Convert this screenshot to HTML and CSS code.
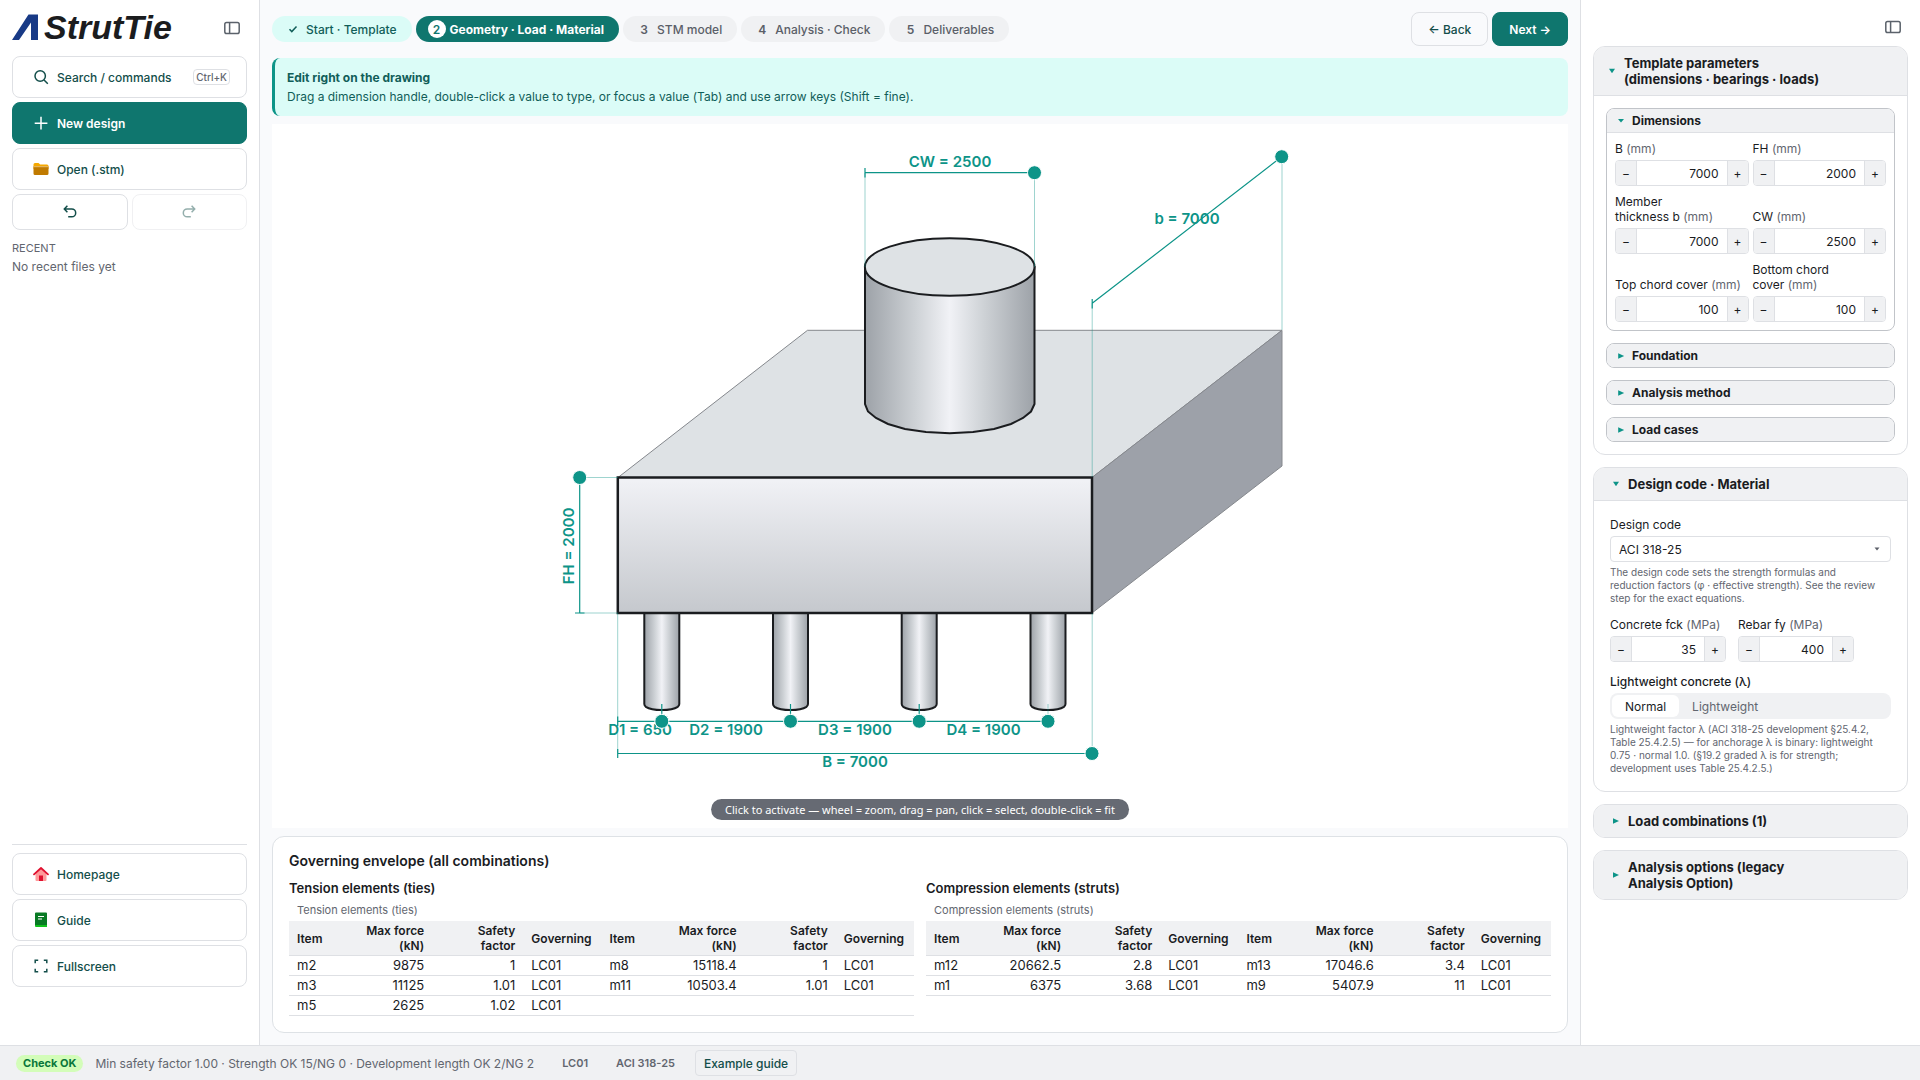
FILE: index.html
```html
<!DOCTYPE html>
<html lang="en">
<head>
<meta charset="utf-8">
<meta name="viewport" content="width=device-width, initial-scale=1">
<title>AStrutTie</title>
<link rel="stylesheet" href="styles.css">
</head>
<body>
<div class="app">
  <aside class="sidebar">
    <div class="brand">
      <div class="logo">
        <svg class="logo-mark" viewBox="0 0 28 26" aria-hidden="true"><path d="M0 26 16.500 0.500H26V26H19V8.500L7 26Z"/></svg>
        <span class="logo-text">StrutTie</span>
      </div>
      <button class="icon-btn" type="button" aria-label="Toggle sidebar">
        <svg viewBox="0 0 18 14" class="panel-icon"><rect x="1.800" y="1.400" width="14.400" height="11.200" rx="1.800"/><path d="M6.600 1.400v11.200"/></svg>
      </button>
    </div>
    <button class="side-btn" type="button">
      <svg class="ic" viewBox="0 0 16 16"><circle cx="7.200" cy="7" r="5.200"/><path d="m11 11 3.800 3.800"/></svg>
      <span>Search / commands</span><kbd>Ctrl+K</kbd>
    </button>
    <button class="side-btn side-btn-primary" type="button">
      <svg class="ic" viewBox="0 0 16 16"><path d="M8 1.800v12.700M1.700 8.200h12.700"/></svg>
      <span>New design</span>
    </button>
    <button class="side-btn" type="button">
      <svg class="pic" viewBox="0 0 16 16"><path fill="#f5a800" d="M0.500 3.500a1.500 1.500 0 0 1 1.500-1.500h3.500l1.700 1.500H14a1.500 1.500 0 0 1 1.500 1.500v3h-15z"/><path fill="#c07a00" d="M0.500 5.600h15v6.900a1.500 1.500 0 0 1-1.500 1.500H2a1.500 1.500 0 0 1-1.500-1.500z"/><path fill="#e8bd72" d="M0.500 5.200h15v1h-15z"/></svg>
      <span>Open (.stm)</span>
    </button>
    <div class="history">
      <button class="side-btn" type="button" aria-label="Undo"><svg class="ic" viewBox="0 0 16 16"><path d="M5.400 1.800 2.300 5l3.100 3.200M2.600 5h7.200a3.900 3.900 0 0 1 0 7.800H6.200"/></svg></button>
      <button class="side-btn" type="button" aria-label="Redo" disabled><svg class="ic" viewBox="0 0 16 16"><path d="m10.600 1.800 3.100 3.200-3.100 3.200M13.400 5H6.200a3.900 3.900 0 0 0 0 7.800h3.600"/></svg></button>
    </div>
    <div class="recent">
      <h2>RECENT</h2>
      <p>No recent files yet</p>
    </div>
    <nav class="side-foot">
      <button class="side-btn" type="button">
        <svg class="pic" viewBox="0 0 16 16"><path fill="#ff9a9a" d="M2.500 7.500 8 2.500l5.500 5V14a1 1 0 0 1-1 1h-9a1 1 0 0 1-1-1z"/><path fill="#e0102f" d="M6 9.500h4V15H6z"/><path fill="none" stroke="#e0102f" stroke-width="1.800" stroke-linecap="round" stroke-linejoin="round" d="M1 8.300 8 2l7 6.300"/></svg>
        <span>Homepage</span>
      </button>
      <button class="side-btn" type="button">
        <svg class="pic" viewBox="0 0 16 16"><path fill="#10c21c" d="M2 11h12v4H3a1 1 0 0 1-1-1z"/><path fill="#087a24" d="M2 1.500a1 1 0 0 1 1-1h10a1 1 0 0 1 1 1V13H2z"/><path stroke="#fff" stroke-width="1.100" d="M5 4.500h6M5 7h4"/></svg>
        <span>Guide</span>
      </button>
      <button class="side-btn" type="button">
        <svg class="ic" viewBox="0 0 16 16"><path d="M2.200 5.200V2.200h3M10.800 2.200h3v3M13.800 10.800v3h-3M5.200 13.800h-3v-3"/></svg>
        <span>Fullscreen</span>
      </button>
    </nav>
  </aside>

  <main class="main">
    <header class="topbar">
      <ol class="steps">
        <li><button class="step step-done" type="button"><span class="num"><svg viewBox="0 0 10 10"><path d="m1.500 5.300 2.300 2.300 4.700-5"/></svg></span>Start · Template</button></li>
        <li><button class="step step-active" type="button" aria-current="step"><span class="num">2</span>Geometry · Load · Material</button></li>
        <li><button class="step" type="button"><span class="num">3</span>STM model</button></li>
        <li><button class="step" type="button"><span class="num">4</span>Analysis · Check</button></li>
        <li><button class="step" type="button"><span class="num">5</span>Deliverables</button></li>
      </ol>
      <button class="btn" type="button">← Back</button>
      <button class="btn btn-primary" type="button">Next →</button>
    </header>

    <section class="banner">
      <strong>Edit right on the drawing</strong>
      <p>Drag a dimension handle, double-click a value to type, or focus a value (Tab) and use arrow keys (Shift = fine).</p>
    </section>

    <section class="canvas" aria-label="Drawing">
      <svg viewBox="272 124 1296 704" class="drawing">
        <defs>
          <linearGradient id="front" x1="0" y1="0" x2="0" y2="1"><stop offset="0" stop-color="#f1f2f6"/><stop offset="1" stop-color="#c5c8cd"/></linearGradient>
          <linearGradient id="round" x1="0" y1="0" x2="1" y2="0"><stop offset="0" stop-color="#9da2a8"/><stop offset="0.300" stop-color="#ced2d6"/><stop offset="0.500" stop-color="#f1f2f6"/><stop offset="0.700" stop-color="#ced2d6"/><stop offset="1" stop-color="#9da2a8"/></linearGradient>
          <path id="pile" d="M-17.500 0V91Q-17.500 92.500-16 93.800Q-11 97 0 97T16 93.800Q17.500 92.500 17.500 91V0Z"/>
        </defs>
        <path class="thin" fill="#dee2e5" d="M618 477.500 807.500 330.300H1282L1092 477.500Z"/>
        <path class="thin" fill="#9da1a9" d="M1092 477.500 1282 330.300V466L1092 613Z"/>
        <g class="thick" fill="url(#round)">
          <use href="#pile" x="661.800" y="613"/><use href="#pile" x="790.500" y="613"/><use href="#pile" x="919.200" y="613"/><use href="#pile" x="1048" y="613"/>
        </g>
        <rect class="heavy" fill="url(#front)" x="617.800" y="477.500" width="474.200" height="135.500"/>
        <path class="thick" fill="url(#round)" d="M865 267V404L868 411.500 876 418 888 424 905 429 926 432 949.700 433.200 973 432 994 429 1011 424 1023 418 1031 411.500 1034.500 404V267Z"/>
        <ellipse class="thick" fill="#dee2e5" cx="949.700" cy="267" rx="84.800" ry="28.800"/>
        <g class="ext">
          <path d="M865 173V267M1034.500 173V267M1092.200 303V477M1282 157V330M579.700 477.500H618M579.700 613H618M617.700 613V753M1092.200 613V753M1048 704V721"/>
        </g>
        <g class="dim">
          <path d="M865 172.700H1034.500M865 168V177.500M1092.200 303.300 1281.700 156.700M1092.200 299V308.500M579.700 477.500V613M575 613H584.500M617.700 721.300H1048M617.700 753.500H1092M617.700 716.500V726M617.700 749V758M661.800 704V721M790.500 704V721M919.200 704V721"/>
        </g>
        <g class="labels">
          <text x="950" y="166.500">CW = 2500</text>
          <text x="1187" y="223.500">b = 7000</text>
          <text transform="translate(574 546) rotate(-90)">FH = 2000</text>
          <text x="640" y="734.500">D1 = 650</text>
          <text x="726" y="734.500">D2 = 1900</text>
          <text x="855" y="734.500">D3 = 1900</text>
          <text x="983.500" y="734.500">D4 = 1900</text>
          <text x="855" y="767">B = 7000</text>
        </g>
        <g class="handles">
          <circle cx="1034.500" cy="172.700" r="7"/><circle cx="1281.700" cy="156.700" r="7"/><circle cx="579.700" cy="477.500" r="7"/>
          <circle cx="661.800" cy="721.300" r="7"/><circle cx="790.500" cy="721.300" r="7"/><circle cx="919.200" cy="721.300" r="7"/><circle cx="1048" cy="721.300" r="7"/><circle cx="1092" cy="753.500" r="7"/>
        </g>
      </svg>
      <p class="hint">Click to activate — wheel = zoom, drag = pan, click = select, double-click = fit</p>
    </section>

    <section class="results">
      <h2>Governing envelope (all combinations)</h2>
      <div class="result-cols">
        <div>
          <h3>Tension elements (ties)</h3>
          <table>
            <caption>Tension elements (ties)</caption>
            <colgroup><col class="c-item"><col class="c-num"><col class="c-num"><col class="c-gov"><col class="c-item"><col class="c-num"><col class="c-num"><col class="c-gov"></colgroup>
            <thead><tr><th>Item</th><th class="r">Max force (kN)</th><th class="r">Safety factor</th><th>Governing</th><th>Item</th><th class="r">Max force (kN)</th><th class="r">Safety factor</th><th>Governing</th></tr></thead>
            <tbody>
              <tr><td>m2</td><td class="r">9875</td><td class="r">1</td><td>LC01</td><td>m8</td><td class="r">15118.4</td><td class="r">1</td><td>LC01</td></tr>
              <tr><td>m3</td><td class="r">11125</td><td class="r">1.01</td><td>LC01</td><td>m11</td><td class="r">10503.4</td><td class="r">1.01</td><td>LC01</td></tr>
              <tr><td>m5</td><td class="r">2625</td><td class="r">1.02</td><td>LC01</td><td></td><td></td><td></td><td></td></tr>
            </tbody>
          </table>
        </div>
        <div>
          <h3>Compression elements (struts)</h3>
          <table>
            <caption>Compression elements (struts)</caption>
            <colgroup><col class="c-item"><col class="c-num"><col class="c-num"><col class="c-gov"><col class="c-item"><col class="c-num"><col class="c-num"><col class="c-gov"></colgroup>
            <thead><tr><th>Item</th><th class="r">Max force (kN)</th><th class="r">Safety factor</th><th>Governing</th><th>Item</th><th class="r">Max force (kN)</th><th class="r">Safety factor</th><th>Governing</th></tr></thead>
            <tbody>
              <tr><td>m12</td><td class="r">20662.5</td><td class="r">2.8</td><td>LC01</td><td>m13</td><td class="r">17046.6</td><td class="r">3.4</td><td>LC01</td></tr>
              <tr><td>m1</td><td class="r">6375</td><td class="r">3.68</td><td>LC01</td><td>m9</td><td class="r">5407.9</td><td class="r">11</td><td>LC01</td></tr>
            </tbody>
          </table>
        </div>
      </div>
    </section>
  </main>

  <aside class="panel">
    <div class="panel-top">
      <button class="icon-btn" type="button" aria-label="Toggle panel">
        <svg viewBox="0 0 18 14" class="panel-icon"><rect x="1.800" y="1.400" width="14.400" height="11.200" rx="1.800"/><path d="M6.600 1.400v11.200"/></svg>
      </button>
    </div>

    <details class="section section-tight" open>
      <summary><svg class="arrow" viewBox="0 0 8 8"><path d="M1 1.700h6L4 6.300z"/></svg><span>Template parameters (dimensions · bearings · loads)</span></summary>
      <div class="groups">
        <details class="group" open>
          <summary><svg class="arrow" viewBox="0 0 8 8"><path d="M1 2h6L4 5.500z"/></svg><span>Dimensions</span></summary>
          <div class="params">
            <div class="field"><label for="p-b">B <span>(mm)</span></label><div class="stepper"><button type="button" aria-label="Decrease">−</button><input id="p-b" value="7000"><button type="button" aria-label="Increase">+</button></div></div>
            <div class="field"><label for="p-fh">FH <span>(mm)</span></label><div class="stepper"><button type="button" aria-label="Decrease">−</button><input id="p-fh" value="2000"><button type="button" aria-label="Increase">+</button></div></div>
            <div class="field"><label for="p-t">Member<br>thickness b <span>(mm)</span></label><div class="stepper"><button type="button" aria-label="Decrease">−</button><input id="p-t" value="7000"><button type="button" aria-label="Increase">+</button></div></div>
            <div class="field"><label for="p-cw">CW <span>(mm)</span></label><div class="stepper"><button type="button" aria-label="Decrease">−</button><input id="p-cw" value="2500"><button type="button" aria-label="Increase">+</button></div></div>
            <div class="field"><label for="p-tc">Top chord cover <span>(mm)</span></label><div class="stepper"><button type="button" aria-label="Decrease">−</button><input id="p-tc" value="100"><button type="button" aria-label="Increase">+</button></div></div>
            <div class="field"><label for="p-bc">Bottom chord<br>cover <span>(mm)</span></label><div class="stepper"><button type="button" aria-label="Decrease">−</button><input id="p-bc" value="100"><button type="button" aria-label="Increase">+</button></div></div>
          </div>
        </details>
        <details class="group"><summary><svg class="arrow" viewBox="0 0 8 8"><path d="M1.200 1.200v5.600L7.200 4z"/></svg><span>Foundation</span></summary></details>
        <details class="group"><summary><svg class="arrow" viewBox="0 0 8 8"><path d="M1.200 1.200v5.600L7.200 4z"/></svg><span>Analysis method</span></summary></details>
        <details class="group"><summary><svg class="arrow" viewBox="0 0 8 8"><path d="M1.200 1.200v5.600L7.200 4z"/></svg><span>Load cases</span></summary></details>
      </div>
    </details>

    <details class="section" open>
      <summary><svg class="arrow" viewBox="0 0 8 8"><path d="M1 1.700h6L4 6.300z"/></svg><span>Design code · Material</span></summary>
      <div class="material">
        <div class="field">
          <label for="code">Design code</label>
          <div class="select"><select id="code"><option>ACI 318-25</option></select><svg class="caret" viewBox="0 0 8 8"><path d="M1.500 2.500h5L4 5.500z"/></svg></div>
          <p class="help">The design code sets the strength formulas and<br>reduction factors (φ · effective strength). See the review<br>step for the exact equations.</p>
        </div>
        <div class="strengths">
          <div class="field"><label for="fck">Concrete fck <span>(MPa)</span></label><div class="stepper"><button type="button" aria-label="Decrease">−</button><input id="fck" value="35"><button type="button" aria-label="Increase">+</button></div></div>
          <div class="field"><label for="fy">Rebar fy <span>(MPa)</span></label><div class="stepper"><button type="button" aria-label="Decrease">−</button><input id="fy" value="400"><button type="button" aria-label="Increase">+</button></div></div>
        </div>
        <div class="field">
          <span class="label-strong" id="lw">Lightweight concrete (λ)</span>
          <div class="segmented" role="group" aria-labelledby="lw"><button type="button" class="on" aria-pressed="true">Normal</button><button type="button" aria-pressed="false">Lightweight</button></div>
          <p class="help">Lightweight factor λ (ACI 318-25 development §25.4.2,<br>Table 25.4.2.5) — for anchorage λ is binary: lightweight<br>0.75 · normal 1.0. (§19.2 graded λ is for strength;<br>development uses Table 25.4.2.5.)</p>
        </div>
      </div>
    </details>

    <details class="section"><summary><svg class="arrow" viewBox="0 0 8 8"><path d="M1 1.300v5.400L7 4z"/></svg><span>Load combinations (1)</span></summary></details>
    <details class="section"><summary><svg class="arrow" viewBox="0 0 8 8"><path d="M1 1.300v5.400L7 4z"/></svg><span>Analysis options (legacy Analysis Option)</span></summary></details>
  </aside>

  <footer class="status">
    <span class="badge">Check OK</span>
    <span class="overview">Min safety factor 1.00 · Strength OK 15/NG 0 · Development length OK 2/NG 2</span>
    <span class="tag">LC01</span>
    <span class="tag">ACI 318-25</span>
    <button class="guide-btn" type="button">Example guide</button>
  </footer>
</div>
</body>
</html>
```
FILE: styles.css
```css
* { box-sizing: border-box; }
body, h2, h3, p, ol { margin: 0; padding: 0; }
body { font: 400 12px/15px Inter, sans-serif; color: #1a1c1f; background: #f9fafc; }
button, input, select { font: inherit; color: inherit; margin: 0; }
button { cursor: pointer; }
summary { cursor: pointer; list-style: none; }
summary::-webkit-details-marker { display: none; }

.app { display: grid; grid-template-columns: 260px minmax(0, 1fr) 340px; grid-template-rows: minmax(0, 1fr) auto; min-height: 100vh; }

/* Sidebar */
.sidebar { display: flex; flex-direction: column; gap: 4px; padding: 12px; background: #fff; border-right: 1px solid #dee0e4; }
.brand { display: flex; align-items: center; justify-content: space-between; height: 32px; margin-bottom: 8px; padding-right: 6px; }
.logo { display: flex; align-items: center; align-self: flex-start; gap: 4px; }
.logo-mark { width: 28px; height: 26px; fill: #183a86; }
.logo-text { font: italic 700 34px/30px "Liberation Sans", Arial, sans-serif; color: #1b1c1e; }
.icon-btn { display: flex; padding: 0; border: 0; background: none; color: #5b626b; }
.panel-icon { width: 18px; height: 14px; fill: none; stroke: currentColor; stroke-width: 1.500; }
.side-btn { display: flex; align-items: center; gap: 8px; height: 42px; padding: 0 16px 0 20px; border: 1px solid #dee0e4; border-radius: 8px; background: #fff; color: #134e4a; font-weight: 500; text-align: left; }
.side-btn-primary { background: #0f766e; border-color: #0f766e; color: #fff; font-weight: 600; }
.side-btn kbd { margin-left: auto; padding: 0 2px; border: 1px solid #dee0e4; border-radius: 4px; font: 500 10px/14px Inter, sans-serif; color: #62666f; }
.ic { width: 16px; height: 16px; fill: none; stroke: currentColor; stroke-width: 1.500; }
.pic { width: 16px; height: 16px; }
.history { display: grid; grid-template-columns: 1fr 1fr; gap: 4px; }
.history .side-btn { height: 36px; justify-content: center; padding: 0; }
.history .side-btn:disabled { opacity: 0.450; }
.recent { padding-top: 4px; color: #62666f; }
.recent h2 { font-size: 11px; font-weight: 400; line-height: 20px; }
.recent p { line-height: 18px; }
.side-foot { display: flex; flex-direction: column; gap: 4px; margin-top: auto; margin-bottom: 46px; padding-top: 8px; border-top: 1px solid #dee0e4; }

/* Main column */
.main { display: flex; flex-direction: column; gap: 8px; padding: 12px; }
.topbar { display: flex; align-items: center; gap: 4px; margin-bottom: 4px; }
.steps { display: flex; gap: 4px; margin-right: auto; list-style: none; }
.step { display: flex; align-items: center; gap: 4px; height: 26px; padding: 0 15px 0 12px; border: 0; border-radius: 13px; background: #f0f1f3; color: #5b5f68; font-weight: 500; white-space: nowrap; }
.num { display: flex; align-items: center; justify-content: center; width: 18px; height: 18px; border-radius: 9px; font-weight: 600; }
.num svg { width: 10px; height: 10px; fill: none; stroke: currentColor; stroke-width: 1.500; }
.step-done { background: #dbfcf7; color: #115e59; }
.step-active { background: #0f766e; color: #fff; font-weight: 700; }
.step-active .num { background: #fff; color: #0f766e; }
.btn { height: 34px; padding: 0 16px; border: 1px solid #dee0e4; border-radius: 8px; background: #f9fafc; color: #134e4a; font-weight: 500; white-space: nowrap; }
.btn-primary { border-color: #0f766e; background: #0f766e; color: #fff; font-weight: 600; }
.banner { padding: 10px 12px; border-left: 3px solid #0d9488; border-radius: 8px; background: #dbfcf7; color: #115e59; line-height: 19px; }
.banner strong { display: block; font-weight: 700; }
.canvas { position: relative; flex: 1 1 0; min-height: 400px; background: #fff; }
.drawing { position: absolute; inset: 0; width: 100%; height: 100%; }
.thin { stroke: #85888d; stroke-width: 1; }
.thick { stroke: #1a1c1f; stroke-width: 2; }
.heavy { stroke: #1a1c1f; stroke-width: 2.500; }
.ext { fill: none; stroke: #0d9488; stroke-width: 1; opacity: 0.400; }
.dim { fill: none; stroke: #0d9488; stroke-width: 1.200; }
.labels { fill: #0d9488; font: 600 15px Inter, sans-serif; text-anchor: middle; }
.handles { fill: #0d9488; stroke: #fff; stroke-width: 1; }
.hint { position: absolute; left: 50%; bottom: 8px; transform: translateX(-50%); padding: 0 14px; border-radius: 11px; background: #666a73; color: #fff; font: 400 11px/21px "Noto Sans", sans-serif; white-space: nowrap; }

/* Results */
.results { padding: 16px; border: 1px solid #dee2e6; border-radius: 12px; background: #fff; }
.results h2 { margin-bottom: 12px; font-size: 14px; font-weight: 600; line-height: 16px; }
.result-cols { display: grid; grid-template-columns: 1fr 1fr; gap: 12px; }
.results h3 { margin-bottom: 8px; font-size: 13px; font-weight: 600; line-height: 15px; }
table { width: 100%; table-layout: fixed; border-collapse: separate; border-spacing: 0; font-size: 13px; }
caption { padding: 0 8px 4px; color: #62666f; font-size: 11px; line-height: 13px; text-align: left; }
.c-item { width: 52px; }
.c-num { width: 91px; }
.c-gov { width: 78px; }
th, td { height: 20px; padding: 2px 8px; border-bottom: 1px solid #dee0e4; text-align: left; line-height: 15px; }
th { background: #f0f1f3; font-size: 12px; font-weight: 600; }
.r { text-align: right; }

/* Parameter panel */
.panel { display: flex; flex-direction: column; gap: 12px; padding: 12px; background: #fff; border-left: 1px solid #dee0e4; }
.panel-top { display: flex; align-items: flex-end; justify-content: flex-end; height: 22px; padding-right: 6px; }
.section { border: 1px solid #dee0e4; border-radius: 12px; overflow: hidden; }
.section > summary { display: flex; align-items: center; gap: 8px; padding: 8px 76px 8px 18px; background: #f0f1f3; font-size: 13px; font-weight: 700; line-height: 16px; }
.section-tight > summary { padding-left: 14px; }
.section[open] > summary { border-bottom: 1px solid #dee0e4; }
.arrow { flex: none; width: 8px; height: 8px; fill: #0d9488; }
.groups { display: flex; flex-direction: column; gap: 12px; padding: 12px; }
.group { border: 1px solid #c1c4c9; border-radius: 8px; overflow: hidden; }
.group > summary { display: flex; align-items: center; gap: 7px; padding: 4px 10px; background: #f0f1f3; font-weight: 700; }
.group[open] > summary { border-bottom: 1px solid #dee0e4; }
.params { display: grid; grid-template-columns: 1fr 1fr; gap: 8px 4px; padding: 8px; }
.field { display: flex; flex-direction: column; justify-content: flex-end; gap: 4px; min-width: 0; }
.field label { white-space: nowrap; }
.field label span { color: #62666f; }
.label-strong { font-weight: 500; }
.stepper { display: flex; height: 26px; border: 1px solid #dee0e4; border-radius: 4px; overflow: hidden; }
.stepper button { flex: none; width: 20px; padding: 0; border: 0; background: #f0f1f3; }
.stepper input { flex: 1; width: 0; min-width: 0; padding: 0 8px; border: 0; border-left: 1px solid #dee0e4; border-right: 1px solid #dee0e4; background: #fff; text-align: right; }
.material { display: flex; flex-direction: column; gap: 12px; padding: 16px; }
.strengths { display: grid; grid-template-columns: 116px 116px; gap: 12px; }
.select { position: relative; display: flex; }
.select select { width: 100%; height: 26px; padding: 0 8px; border: 1px solid #dee0e4; border-radius: 4px; appearance: none; background: #fff; }
.caret { position: absolute; right: 10px; top: 9px; width: 8px; height: 8px; fill: #5b5f68; pointer-events: none; }
.help { color: #62666f; font-size: 10px; line-height: 13px; white-space: nowrap; }
.segmented { display: flex; height: 26px; padding: 2px; border-radius: 8px; background: #f0f1f3; }
.segmented button { padding: 0 13px; border: 0; border-radius: 6px; background: none; color: #62666f; }
.segmented .on { background: #fff; color: #1a1c1f; }

/* Status bar */
.status { grid-column: 1 / -1; display: flex; align-items: center; height: 35px; padding: 0 16px; border-top: 1px solid #dee0e4; background: #f0f1f3; color: #62666f; }
.badge { margin-right: 12px; padding: 0 7px; border-radius: 9px; background: #d3fdb9; color: #08763a; font-size: 11px; font-weight: 700; line-height: 17px; }
.overview { margin-right: 20px; }
.tag { margin-right: 12px; padding: 0 8px; font-size: 11px; font-weight: 600; }
.guide-btn { height: 26px; padding: 0 8px; border: 1px solid #dee0e4; border-radius: 4px; background: #f0f1f3; color: #134e4a; font-weight: 500; }
```
